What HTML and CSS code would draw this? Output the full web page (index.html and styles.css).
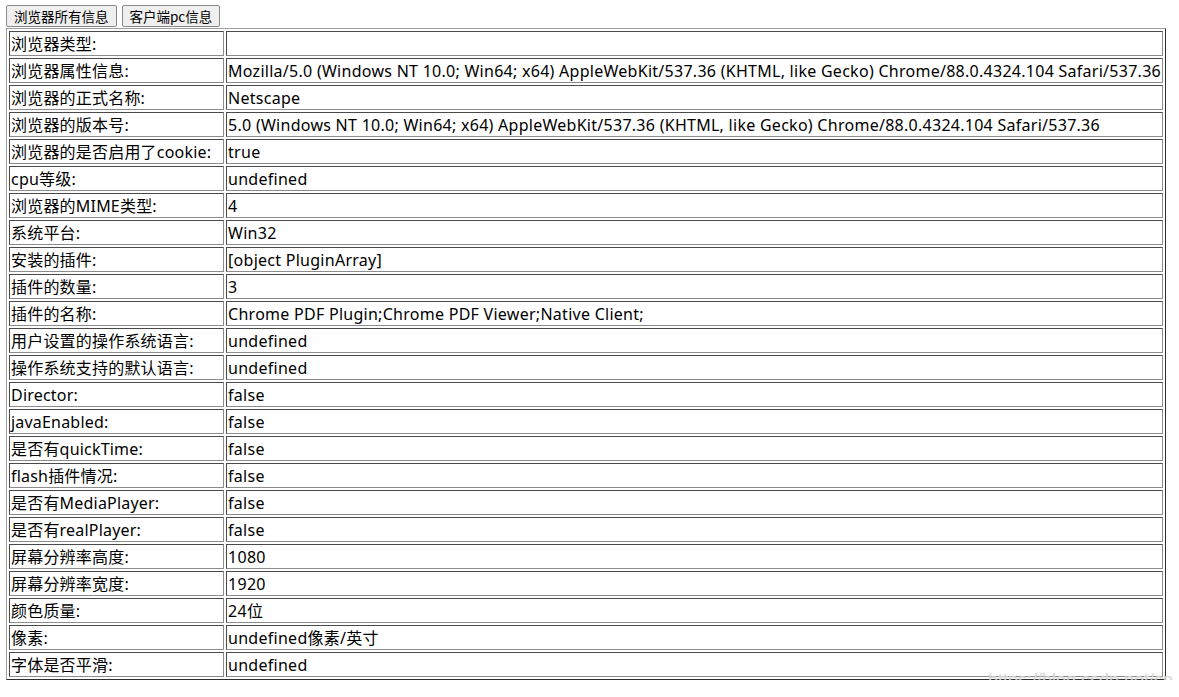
FILE: index.html
```html
<!DOCTYPE html>
<html lang="zh-CN">
<head>
<meta charset="utf-8">
<title>浏览器信息</title>
<link rel="stylesheet" href="styles.css">
</head>
<body>
<div class="toolbar">
  <button class="btn">浏览器所有信息</button>
  <button class="btn">客户端pc信息</button>
</div>
<table class="info">
  <tr><td class="k">浏览器类型:</td><td class="v"></td></tr>
  <tr><td class="k">浏览器属性信息:</td><td class="v">Mozilla/5.0 (Windows NT 10.0; Win64; x64) AppleWebKit/537.36 (KHTML, like Gecko) Chrome/88.0.4324.104 Safari/537.36</td></tr>
  <tr><td class="k">浏览器的正式名称:</td><td class="v">Netscape</td></tr>
  <tr><td class="k">浏览器的版本号:</td><td class="v">5.0 (Windows NT 10.0; Win64; x64) AppleWebKit/537.36 (KHTML, like Gecko) Chrome/88.0.4324.104 Safari/537.36</td></tr>
  <tr><td class="k">浏览器的是否启用了cookie:</td><td class="v">true</td></tr>
  <tr><td class="k">cpu等级:</td><td class="v">undefined</td></tr>
  <tr><td class="k">浏览器的MIME类型:</td><td class="v">4</td></tr>
  <tr><td class="k">系统平台:</td><td class="v">Win32</td></tr>
  <tr><td class="k">安装的插件:</td><td class="v">[object PluginArray]</td></tr>
  <tr><td class="k">插件的数量:</td><td class="v">3</td></tr>
  <tr><td class="k">插件的名称:</td><td class="v">Chrome PDF Plugin;Chrome PDF Viewer;Native Client;</td></tr>
  <tr><td class="k">用户设置的操作系统语言:</td><td class="v">undefined</td></tr>
  <tr><td class="k">操作系统支持的默认语言:</td><td class="v">undefined</td></tr>
  <tr><td class="k">Director:</td><td class="v">false</td></tr>
  <tr><td class="k">javaEnabled:</td><td class="v">false</td></tr>
  <tr><td class="k">是否有quickTime:</td><td class="v">false</td></tr>
  <tr><td class="k">flash插件情况:</td><td class="v">false</td></tr>
  <tr><td class="k">是否有MediaPlayer:</td><td class="v">false</td></tr>
  <tr><td class="k">是否有realPlayer:</td><td class="v">false</td></tr>
  <tr><td class="k">屏幕分辨率高度:</td><td class="v">1080</td></tr>
  <tr><td class="k">屏幕分辨率宽度:</td><td class="v">1920</td></tr>
  <tr><td class="k">颜色质量:</td><td class="v">24位</td></tr>
  <tr><td class="k">像素:</td><td class="v">undefined像素/英寸</td></tr>
  <tr><td class="k">字体是否平滑:</td><td class="v">undefined</td></tr>
</table>
<div class="watermark">https://blog.csdn.net/cphfx</div>
</body>
</html>
```
FILE: styles.css
```css
html, body {
  background: #fff;
}
body {
  margin: 5px 6px;
  font-family: "Noto Sans", "Noto Sans CJK SC", sans-serif;
  color: #000;
  position: relative;
}
.toolbar {
  display: flex;
  gap: 5px;
  height: 23px;
}
.btn {
  font-family: "Noto Sans CJK SC", sans-serif;
  font-size: 13.5px;
  line-height: 16px;
  height: 22px;
  padding: 1px 7px;
  background: #efefef;
  border: 1px solid #8a8a8a;
  border-radius: 2px;
  color: #000;
}
.info {
  border-collapse: separate;
  border-spacing: 2px;
  border: 1px solid;
  border-color: #a0a0a0 #2e2e2e #2e2e2e #a0a0a0;
  width: 1160px;
  font-size: 16px;
}
.info td {
  border: 1px solid;
  border-color: #4a4a4a #8c8c8c #8c8c8c #4a4a4a;
  padding: 2px 1px 0 1px;
  height: 21px;
  line-height: 21px;
  white-space: nowrap;
  vertical-align: middle;
}
.info td.k {
  width: 212px;
  letter-spacing: 0.2px;
}
.info td.v {
  letter-spacing: 0.27px;
}
.watermark {
  position: absolute;
  left: 982px;
  top: 665px;
  font-family: "Liberation Sans", Arial, sans-serif;
  font-size: 18px;
  line-height: 20px;
  color: rgba(228, 228, 228, 0.8);
  text-shadow: 0 0 1px rgba(150,150,150,0.55);
}
```
